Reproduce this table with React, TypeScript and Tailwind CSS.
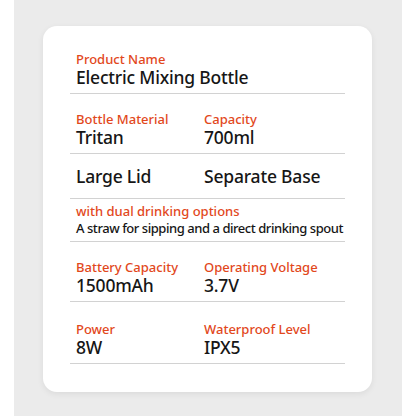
import React from 'react';

const Label: React.FC<{ children: React.ReactNode }> = ({ children }) => (
  <div className="text-[13px] leading-[16px] font-medium text-[#e2481c]">{children}</div>
);

const Value: React.FC<{ children: React.ReactNode }> = ({ children }) => (
  <div className="text-[17.5px] leading-[20px] font-medium tracking-[-0.2px] text-[#161616]">{children}</div>
);

const Field: React.FC<{ label: string; value: string }> = ({ label, value }) => (
  <div>
    <Label>{label}</Label>
    <Value>{value}</Value>
  </div>
);

export default function App() {
  return (
    <div className="w-[416px] h-[416px] bg-white" style={{ fontFamily: '"Noto Sans", "Open Sans", sans-serif' }}>
      <div className="ml-[14px] w-[388px] h-[416px] bg-[#ebebeb] pt-[26px]">
        <div className="ml-[29px] w-[329px] bg-white rounded-[14px] shadow-[0_2px_6px_rgba(0,0,0,0.07)] px-[27px] pt-[25px] pb-[28px]">
          {/* Product name */}
          <div className="px-[6px] pb-[6px] border-b border-[#d2d2d2]">
            <Field label="Product Name" value="Electric Mixing Bottle" />
          </div>

          {/* Material / capacity */}
          <div className="grid grid-cols-[128px_1fr] px-[6px] pt-[17px] pb-[6px] border-b border-[#d2d2d2]">
            <Field label="Bottle Material" value="Tritan" />
            <Field label="Capacity" value="700ml" />
          </div>

          {/* Lid / base */}
          <div className="grid grid-cols-[128px_1fr] px-[6px] py-[12px] border-b border-[#d2d2d2]">
            <Value>Large Lid</Value>
            <Value>Separate Base</Value>
          </div>

          {/* Drinking options */}
          <div className="px-[6px] pt-[4px] pb-[4px] border-b border-[#d2d2d2]">
            <Label>with dual drinking options</Label>
            <div className="mt-px text-[13px] leading-[17px] font-medium tracking-[-0.45px] text-[#161616] whitespace-nowrap">
              A straw for sipping and a direct drinking spout
            </div>
          </div>

          {/* Battery / voltage */}
          <div className="grid grid-cols-[128px_1fr] px-[6px] pt-[17px] pb-[6px] border-b border-[#d2d2d2]">
            <Field label="Battery Capacity" value="1500mAh" />
            <Field label="Operating Voltage" value="3.7V" />
          </div>

          {/* Power / waterproof */}
          <div className="grid grid-cols-[128px_1fr] px-[6px] pt-[19px] pb-[6px] border-b border-[#d2d2d2]">
            <Field label="Power" value="8W" />
            <Field label="Waterproof Level" value="IPX5" />
          </div>
        </div>
      </div>
    </div>
  );
}
